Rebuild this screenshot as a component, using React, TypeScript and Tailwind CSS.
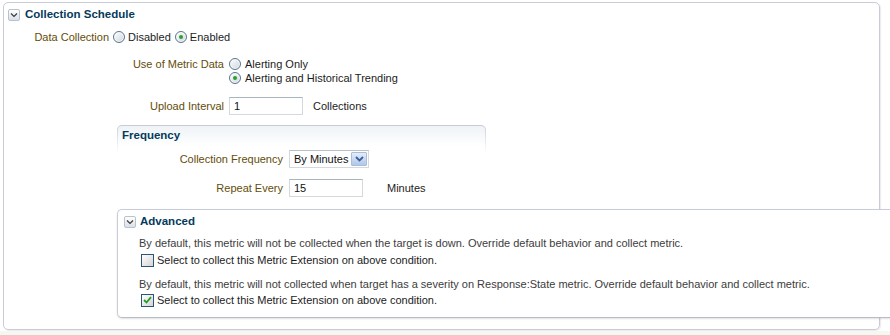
import React from 'react'

const label = 'text-[#634d08] text-right'

function Toggle() {
  return (
    <span className="w-[12px] h-[12px] rounded-[2px] border border-[#b9c1cc] bg-gradient-to-b from-white to-[#d9e0e8] flex items-center justify-center shrink-0">
      <svg width="8" height="6" viewBox="0 0 8 6">
        <path d="M1 1.5 L4 4.5 L7 1.5" fill="none" stroke="#3a3a3a" strokeWidth="1.2" />
      </svg>
    </span>
  )
}

function Radio({ on }: { on?: boolean }) {
  return (
    <span className="w-[12px] h-[12px] rounded-full border border-[#587590] bg-gradient-to-br from-white to-[#cfd6dd] flex items-center justify-center shrink-0 shadow-[inset_0_0_0_1px_rgba(255,255,255,0.8)]">
      {on && <span className="w-[4px] h-[4px] rounded-full bg-[#2e9e2e]" />}
    </span>
  )
}

function Check({ on }: { on?: boolean }) {
  return (
    <span className="w-[13px] h-[13px] border border-[#2b567a] bg-gradient-to-br from-white to-[#d4d4d4] flex items-center justify-center shrink-0">
      {on && (
        <svg width="9" height="8" viewBox="0 0 9 8">
          <path d="M1 4 L3.5 6.5 L8 1.2" fill="none" stroke="#2a9a2a" strokeWidth="1.8" />
        </svg>
      )}
    </span>
  )
}

function Field({ value }: { value: string }) {
  return (
    <div className="w-[74px] h-[18px] border border-[#d3d9dd] border-t-[#a7b6bd] bg-white flex items-center pl-[4px] text-[#111]">
      {value}
    </div>
  )
}

export default function App() {
  return (
    <div className="w-[890px] h-[335px] overflow-hidden bg-white font-['Liberation_Sans',Arial,sans-serif] text-[11px] text-[#1c1c1c]">
      <div className="ml-[3px] mt-[2px] w-[877px] h-[328px] rounded-[5px] border border-[#c8ccd8] shadow-[1px_1px_1px_rgba(0,0,0,0.08)]">
        {/* Collection Schedule header */}
        <div className="flex items-center h-[24px] pl-[4px] gap-[5px]">
          <Toggle />
          <span className="text-[11.5px] font-bold text-[#053a5c]">Collection Schedule</span>
        </div>

        {/* Data Collection */}
        <div className="flex items-center h-[18px] mt-[1px]">
          <span className={`${label} w-[105px]`}>Data Collection</span>
          <div className="flex items-center ml-[4px]">
            <Radio />
            <span className="ml-[3px]">Disabled</span>
            <span className="ml-[4px]"><Radio on /></span>
            <span className="ml-[3px]">Enabled</span>
          </div>
        </div>

        {/* Use of Metric Data */}
        <div className="flex mt-[11px]">
          <span className={`${label} w-[220px] h-[14px] leading-[14px]`}>Use of Metric Data</span>
          <div className="ml-[5px] flex flex-col">
            <div className="flex items-center h-[14px] gap-[4px]">
              <Radio />
              <span>Alerting Only</span>
            </div>
            <div className="flex items-center h-[14px] gap-[4px]">
              <Radio on />
              <span>Alerting and Historical Trending</span>
            </div>
          </div>
        </div>

        {/* Upload Interval */}
        <div className="flex items-center mt-[12px] h-[18px]">
          <span className={`${label} w-[220px]`}>Upload Interval</span>
          <div className="ml-[5px]"><Field value="1" /></div>
          <span className="ml-[10px]">Collections</span>
        </div>

        {/* Frequency */}
        <div className="ml-[113px] mt-[10px] w-[369px] rounded-t-[5px] bg-gradient-to-b from-[#c9ccd8] from-0% to-white to-[28px] px-[1px] pt-[1px]">
          <div className="rounded-t-[4px] bg-gradient-to-b from-[#eef3f6] to-white to-[20px]">
            <div className="h-[19px] flex items-center pl-[4px] text-[11.5px] font-bold text-[#053a5c]">Frequency</div>
            <div className="flex items-center mt-[5px] h-[18px]">
              <span className={`${label} w-[165px]`}>Collection Frequency</span>
              <div className="ml-[6px] w-[80px] h-[18px] border border-[#d3d9dd] border-t-[#b5c1c7] bg-white flex items-center">
                <span className="pl-[4px] flex-1 text-[#111]">By Minutes</span>
                <span className="w-[16px] h-[14px] mr-[1px] rounded-[1px] border border-[#a9bddb] bg-gradient-to-b from-[#e4edf9] to-[#afc7e9] flex items-center justify-center">
                  <svg width="9" height="6" viewBox="0 0 9 6">
                    <path d="M1 1 L4.5 4.5 L8 1" fill="none" stroke="#3b5f9c" strokeWidth="1.8" />
                  </svg>
                </span>
              </div>
            </div>
            <div className="flex items-center mt-[11px] h-[18px]">
              <span className={`${label} w-[165px]`}>Repeat Every</span>
              <div className="ml-[6px]"><Field value="15" /></div>
              <span className="ml-[24px]">Minutes</span>
            </div>
          </div>
        </div>

        {/* Advanced */}
        <div className="ml-[113px] mt-[12px] w-[780px] rounded-l-[5px] border border-r-0 border-[#c8ccd8] border-b-[#b8bcc8] bg-white shadow-[0_1px_2px_rgba(0,0,0,0.12)] pb-[10px]">
          <div className="flex items-center h-[23px] pl-[6px] gap-[4px]">
            <Toggle />
            <span className="text-[11.5px] font-bold text-[#053a5c]">Advanced</span>
          </div>
          <div className="pl-[21px] text-[#3c3c3c]">
            <div className="h-[14px] leading-[14px] mt-[3px]">
              By default, this metric will not be collected when the target is down. Override default behavior and collect metric.
            </div>
            <div className="flex items-center h-[14px] mt-[3px] pl-[2px] gap-[3px] text-[#1c1c1c]">
              <Check />
              <span>Select to collect this Metric Extension on above condition.</span>
            </div>
            <div className="h-[14px] leading-[14px] mt-[10px]">
              By default, this metric will not collected when target has a severity on Response:State metric. Override default behavior and collect metric.
            </div>
            <div className="flex items-center h-[14px] mt-[2px] pl-[2px] gap-[3px] text-[#1c1c1c]">
              <Check on />
              <span>Select to collect this Metric Extension on above condition.</span>
            </div>
          </div>
        </div>
      </div>
      <div className="mt-[1px] h-[4px] bg-[#f5f7f1]" />
    </div>
  )
}
